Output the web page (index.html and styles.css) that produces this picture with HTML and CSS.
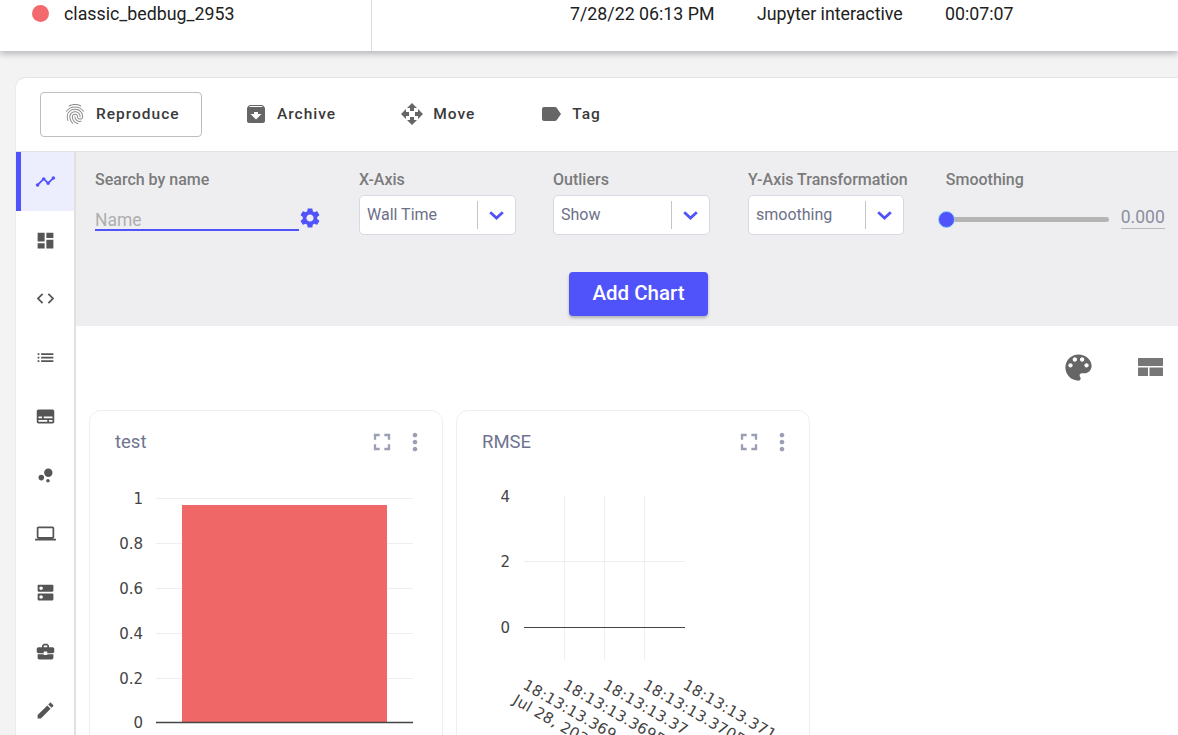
FILE: index.html
```html
<!DOCTYPE html>
<html>

<head>
  <meta charset="UTF-8">
  <title>classic_bedbug_2953</title>
  <link rel="stylesheet" href="styles.css">
</head>

<body>
  <div class="runRow">
    <div class="runName"><span class="statusDot"></span>classic_bedbug_2953</div>
    <div></div>
    <div>7/28/22 06:13 PM</div>
    <div>Jupyter interactive</div>
    <div>00:07:07</div>
  </div>

  <div class="panel">
    <div class="toolbar">
      <div class="reproduce">
        <svg class="icon fingerprint" viewBox="0 0 24 24"><path d="M17.81 4.47c-.08 0-.16-.02-.23-.06C15.66 3.42 14 3 12.01 3c-1.98 0-3.86.47-5.57 1.41-.24.13-.54.04-.68-.2-.13-.24-.04-.55.2-.68C7.82 2.52 9.86 2 12.01 2c2.13 0 3.99.47 6.03 1.52.25.13.34.43.21.67-.09.18-.26.28-.44.28zM3.5 9.72c-.1 0-.2-.03-.29-.09-.23-.16-.28-.47-.12-.7.99-1.4 2.25-2.5 3.75-3.27C9.98 4.04 14 4.03 17.15 5.65c1.5.77 2.76 1.86 3.75 3.25.16.22.11.54-.12.7-.23.16-.54.11-.7-.12-.9-1.26-2.04-2.25-3.39-2.94-2.87-1.47-6.54-1.47-9.4.01-1.36.7-2.5 1.7-3.4 2.96-.08.14-.23.21-.39.21zm6.25 12.07c-.13 0-.26-.05-.35-.15-.87-.87-1.34-1.43-2.01-2.64-.69-1.23-1.05-2.73-1.05-4.34 0-2.97 2.54-5.39 5.66-5.39s5.66 2.42 5.66 5.39c0 .28-.22.5-.5.5s-.5-.22-.5-.5c0-2.42-2.09-4.39-4.66-4.39s-4.66 1.97-4.66 4.39c0 1.44.32 2.77.93 3.85.64 1.15 1.08 1.64 1.85 2.42.19.2.19.51 0 .71-.11.1-.24.15-.37.15zm7.17-1.85c-1.19 0-2.24-.3-3.1-.89-1.49-1.01-2.38-2.65-2.38-4.39 0-.28.22-.5.5-.5s.5.22.5.5c0 1.41.72 2.74 1.94 3.56.71.48 1.54.71 2.54.71.24 0 .64-.03 1.04-.1.27-.05.53.13.58.41.05.27-.13.53-.41.58-.57.11-1.07.12-1.21.12zM14.91 22c-.04 0-.09-.01-.13-.02-1.59-.44-2.63-1.03-3.72-2.1-1.4-1.39-2.17-3.24-2.17-5.22 0-1.62 1.38-2.94 3.08-2.94s3.08 1.32 3.08 2.94c0 1.07.93 1.94 2.08 1.94s2.08-.87 2.08-1.94c0-3.77-3.25-6.83-7.25-6.83-2.84 0-5.44 1.58-6.61 4.03-.39.81-.59 1.76-.59 2.8 0 .78.07 2.01.67 3.61.1.26-.03.55-.29.64-.26.1-.55-.04-.64-.29-.49-1.31-.73-2.61-.73-3.96 0-1.2.23-2.29.68-3.24 1.33-2.79 4.28-4.6 7.51-4.6 4.55 0 8.25 3.51 8.25 7.83 0 1.62-1.38 2.94-3.08 2.94s-3.08-1.32-3.08-2.94c0-1.07-.93-1.94-2.08-1.94s-2.08.87-2.08 1.94c0 1.71.66 3.31 1.87 4.51.95.94 1.86 1.46 3.27 1.85.27.07.42.35.35.61-.05.23-.26.38-.47.38z"/></svg>
        Reproduce
      </div>
      <div class="toolBtn">
        <svg class="icon" viewBox="0 0 24 24"><path d="M20.54 5.23l-1.39-1.68C18.88 3.21 18.47 3 18 3H6c-.47 0-.88.21-1.16.55L3.46 5.23C3.17 5.57 3 6.02 3 6.5V19c0 1.1.9 2 2 2h14c1.1 0 2-.9 2-2V6.5c0-.48-.17-.93-.46-1.27zM12 17.5L6.5 12H10v-2h4v2h3.5L12 17.5zM5.12 5l.81-1h12l.94 1H5.12z"/></svg>
        Archive
      </div>
      <div class="toolBtn">
        <svg class="icon" viewBox="0 0 24 24"><path d="M10 9h4V6h3l-5-5-5 5h3v3zm-1 1H6V7l-5 5 5 5v-3h3v-4zm14 2l-5-5v3h-3v4h3v3l5-5zm-9 3h-4v3H7l5 5 5-5h-3v-3z"/></svg>
        Move
      </div>
      <div class="toolBtn">
        <svg class="icon" viewBox="0 0 24 24"><path d="M17.63 5.84C17.27 5.33 16.67 5 16 5L5 5.01C3.9 5.01 3 5.9 3 7v10c0 1.1.9 1.99 2 1.99L16 19c.67 0 1.27-.33 1.63-.84L22 12l-4.37-6.16z"/></svg>
        Tag
      </div>
    </div>

    <div class="panelBody">
      <div class="tabs">
        <div class="tab active"><svg viewBox="0 0 24 24"><path d="M23 8c0 1.1-.9 2-2 2-.18 0-.35-.02-.51-.07l-3.56 3.55c.05.16.07.34.07.52 0 1.1-.9 2-2 2s-2-.9-2-2c0-.18.02-.36.07-.52l-2.55-2.55c-.16.05-.34.07-.52.07s-.36-.02-.52-.07l-4.55 4.56c.05.16.07.33.07.51 0 1.1-.9 2-2 2s-2-.9-2-2 .9-2 2-2c.18 0 .35.02.51.07l4.56-4.55C8.02 9.36 8 9.18 8 9c0-1.1.9-2 2-2s2 .9 2 2c0 .18-.02.36-.07.52l2.55 2.55c.16-.05.34-.07.52-.07s.36.02.52.07l3.55-3.56C19.02 8.35 19 8.18 19 8c0-1.1.9-2 2-2s2 .9 2 2z"/></svg></div>
        <div class="tab"><svg viewBox="0 0 24 24"><path d="M3 13h8V3H3v10zm0 8h8v-6H3v6zm10 0h8V11h-8v10zm0-18v6h8V3h-8z"/></svg></div>
        <div class="tab"><svg viewBox="0 0 24 24"><path d="M9.4 16.6L4.8 12l4.6-4.6L8 6l-6 6 6 6 1.4-1.4zm5.2 0l4.6-4.6-4.6-4.6L16 6l6 6-6 6-1.4-1.4z"/></svg></div>
        <div class="tab"><svg viewBox="0 0 24 24"><path d="M3 13h2v-2H3v2zm0 4h2v-2H3v2zm0-8h2V7H3v2zm4 4h14v-2H7v2zm0 4h14v-2H7v2zM7 7v2h14V7H7z"/></svg></div>
        <div class="tab"><svg viewBox="0 0 24 24"><path d="M20 4H4c-1.1 0-2 .9-2 2v12c0 1.1.9 2 2 2h16c1.1 0 2-.9 2-2V6c0-1.1-.9-2-2-2zM4 12h4v2H4v-2zm10 6H4v-2h10v2zm6 0h-4v-2h4v2zm0-4H10v-2h10v2z"/></svg></div>
        <div class="tab"><svg viewBox="0 0 24 24"><circle cx="7.2" cy="14.4" r="3.2"/><circle cx="14.8" cy="18" r="2"/><circle cx="15.2" cy="8.8" r="4.8"/></svg></div>
        <div class="tab"><svg viewBox="0 0 24 24"><path d="M20 18c1.1 0 1.99-.9 1.99-2L22 6c0-1.1-.9-2-2-2H4c-1.1 0-2 .9-2 2v10c0 1.1.9 2 2 2H0v2h24v-2h-4zM4 6h16v10H4V6z"/></svg></div>
        <div class="tab"><svg viewBox="0 0 24 24"><path d="M20 13H4c-.55 0-1 .45-1 1v6c0 .55.45 1 1 1h16c.55 0 1-.45 1-1v-6c0-.55-.45-1-1-1zM7 19c-1.1 0-2-.9-2-2s.9-2 2-2 2 .9 2 2-.9 2-2 2zM20 3H4c-.55 0-1 .45-1 1v6c0 .55.45 1 1 1h16c.55 0 1-.45 1-1V4c0-.55-.45-1-1-1zM7 9c-1.1 0-2-.9-2-2s.9-2 2-2 2 .9 2 2-.9 2-2 2z"/></svg></div>
        <div class="tab"><svg viewBox="0 0 24 24"><path d="M10 16v-1H3.01L3 19c0 1.11.89 2 2 2h14c1.11 0 2-.89 2-2v-4h-7v1h-4zm10-9h-4.01V5l-2-2h-4l-2 2v2H4c-1.1 0-2 .9-2 2v3c0 1.11.89 2 2 2h6v-2h4v2h6c1.1 0 2-.9 2-2V9c0-1.1-.9-2-2-2zm-6 0h-4V5h4v2z"/></svg></div>
        <div class="tab"><svg viewBox="0 0 24 24"><path d="M3 17.25V21h3.75L17.81 9.94l-3.75-3.75L3 17.25zM20.71 7.04c.39-.39.39-1.02 0-1.41l-2.34-2.34c-.39-.39-1.02-.39-1.41 0l-1.83 1.83 3.75 3.75 1.83-1.83z"/></svg></div>
      </div>

      <div class="content">
        <div class="filters">
          <div class="filterRow">
            <div class="filter searchFilter">
              <div class="filterLabel">Search by name</div>
              <div class="searchRow">
                <div class="searchInput">Name</div>
                <svg class="gear" viewBox="0 0 24 24"><path d="M19.14 12.94c.04-.3.06-.61.06-.94 0-.32-.02-.64-.07-.94l2.03-1.58c.18-.14.23-.41.12-.61l-1.92-3.32c-.12-.22-.37-.29-.59-.22l-2.39.96c-.5-.38-1.03-.7-1.62-.94l-.36-2.54c-.04-.24-.24-.41-.48-.41h-3.84c-.24 0-.43.17-.47.41l-.36 2.54c-.59.24-1.13.57-1.62.94l-2.39-.96c-.22-.08-.47 0-.59.22L2.74 8.87c-.12.21-.08.47.12.61l2.03 1.58c-.05.3-.09.63-.09.94s.02.64.07.94l-2.03 1.58c-.18.14-.23.41-.12.61l1.92 3.32c.12.22.37.29.59.22l2.39-.96c.5.38 1.03.7 1.62.94l.36 2.54c.05.24.24.41.48.41h3.84c.24 0 .44-.17.47-.41l.36-2.54c.59-.24 1.13-.56 1.62-.94l2.39.96c.22.08.47 0 .59-.22l1.92-3.32c.12-.22.07-.47-.12-.61l-2.01-1.58zM12 15.6c-1.98 0-3.6-1.62-3.6-3.6s1.62-3.6 3.6-3.6 3.6 1.62 3.6 3.6-1.62 3.6-3.6 3.6z"/></svg>
              </div>
            </div>
            <div class="filter">
              <div class="filterLabel">X-Axis</div>
              <div class="select"><span class="selectValue">Wall Time</span><span class="selectArrow"><svg viewBox="0 0 15 9"><path d="M1.2 1.2L7.5 7l6.3-5.8"/></svg></span></div>
            </div>
            <div class="filter">
              <div class="filterLabel">Outliers</div>
              <div class="select"><span class="selectValue">Show</span><span class="selectArrow"><svg viewBox="0 0 15 9"><path d="M1.2 1.2L7.5 7l6.3-5.8"/></svg></span></div>
            </div>
            <div class="filter yAxisFilter">
              <div class="filterLabel">Y-Axis Transformation</div>
              <div class="select"><span class="selectValue">smoothing</span><span class="selectArrow"><svg viewBox="0 0 15 9"><path d="M1.2 1.2L7.5 7l6.3-5.8"/></svg></span></div>
            </div>
            <div class="filter smoothFilter">
              <div class="filterLabel">Smoothing</div>
              <div class="sliderRow">
                <div class="sliderTrack"><span class="sliderThumb"></span></div>
                <div class="sliderValue">0.000</div>
              </div>
            </div>
          </div>
          <div class="addRow"><div class="addChart">Add Chart</div></div>
        </div>

        <div class="chartTools">
          <svg class="palette" viewBox="0 0 24 24"><path d="M12 3c-4.97 0-9 4.03-9 9s4.03 9 9 9c.83 0 1.5-.67 1.5-1.5 0-.39-.15-.74-.39-1.01-.23-.26-.38-.61-.38-.99 0-.83.67-1.5 1.5-1.5H16c2.76 0 5-2.24 5-5 0-4.42-4.03-8-9-8zm-5.5 9c-.83 0-1.5-.67-1.5-1.5S5.67 9 6.5 9 8 9.67 8 10.5 7.33 12 6.5 12zm3-4C8.67 8 8 7.33 8 6.5S8.67 5 9.5 5s1.5.67 1.5 1.5S10.33 8 9.5 8zm5 0c-.83 0-1.5-.67-1.5-1.5S13.67 5 14.5 5s1.5.67 1.5 1.5S15.33 8 14.5 8zm3 4c-.83 0-1.5-.67-1.5-1.5S16.67 9 17.5 9s1.5.67 1.5 1.5-.67 1.5-1.5 1.5z"/></svg>
          <svg class="layoutIcon" viewBox="0 0 25 18"><path d="M0 0h25v8H0zM0 9.5h10V18H0zM11.5 9.5H25V18H11.5z"/></svg>
        </div>

        <div class="charts">
          <div class="card">
            <div class="cardHead">
              <span class="cardTitle">test</span>
              <svg class="cardIcon" viewBox="0 0 24 24"><path d="M7 14H5v5h5v-2H7v-3zm-2-4h2V7h3V5H5v5zm12 7h-3v2h5v-5h-2v3zM14 5v2h3v3h2V5h-5z"/></svg>
              <svg class="cardIcon" viewBox="0 0 24 24"><path d="M12 8c1.1 0 2-.9 2-2s-.9-2-2-2-2 .9-2 2 .9 2 2 2zm0 2c-1.1 0-2 .9-2 2s.9 2 2 2 2-.9 2-2-.9-2-2-2zm0 6c-1.1 0-2 .9-2 2s.9 2 2 2 2-.9 2-2-.9-2-2-2z"/></svg>
            </div>
            <svg class="plot" viewBox="90 470 352 265">
              <g class="grid">
                <path d="M156 498.5h257M156 543.5h257M156 588.5h257M156 633.5h257M156 678.5h257"/>
              </g>
              <rect x="182" y="505" width="205" height="218" fill="#ef6767"/>
              <path class="zero thick" d="M156 722.5h257"/>
              <g class="tick">
                <text x="143" y="504">1</text>
                <text x="143" y="549">0.8</text>
                <text x="143" y="594">0.6</text>
                <text x="143" y="639">0.4</text>
                <text x="143" y="684">0.2</text>
                <text x="143" y="728">0</text>
              </g>
            </svg>
          </div>

          <div class="card">
            <div class="cardHead">
              <span class="cardTitle">RMSE</span>
              <svg class="cardIcon" viewBox="0 0 24 24"><path d="M7 14H5v5h5v-2H7v-3zm-2-4h2V7h3V5H5v5zm12 7h-3v2h5v-5h-2v3zM14 5v2h3v3h2V5h-5z"/></svg>
              <svg class="cardIcon" viewBox="0 0 24 24"><path d="M12 8c1.1 0 2-.9 2-2s-.9-2-2-2-2 .9-2 2 .9 2 2 2zm0 2c-1.1 0-2 .9-2 2s.9 2 2 2 2-.9 2-2-.9-2-2-2zm0 6c-1.1 0-2 .9-2 2s.9 2 2 2 2-.9 2-2-.9-2-2-2z"/></svg>
            </div>
            <svg class="plot" viewBox="457 470 352 265">
              <g class="grid">
                <path d="M524 561.5h161M564.5 496v164M604.5 496v164M644.5 496v164"/>
              </g>
              <path class="zero" d="M524 627.5h161"/>
              <g class="tick">
                <text x="510" y="502">4</text>
                <text x="510" y="567">2</text>
                <text x="510" y="633">0</text>
              </g>
              <g class="tick angled">
                <text transform="translate(522 688) rotate(30)">18:13:13.369</text>
                <text transform="translate(562 688) rotate(30)">18:13:13.3695</text>
                <text transform="translate(602 688) rotate(30)">18:13:13.37</text>
                <text transform="translate(642 688) rotate(30)">18:13:13.3705</text>
                <text transform="translate(682 688) rotate(30)">18:13:13.371</text>
                <text transform="translate(512 703) rotate(30)">Jul 28, 2022</text>
              </g>
            </svg>
          </div>
        </div>
      </div>
    </div>
  </div>
</body>

</html>
```

FILE: styles.css
```css
html,
body {
  height: 735px;
  overflow: hidden;
}

body {
  margin: 0;
  background-color: #f3f3f3;
  font-family: Roboto, "Liberation Sans", sans-serif;
  color: #212121;
}

.runRow {
  display: grid;
  grid-template-columns: 372px 198px 187px 188px 1fr;
  height: 51px;
  background-color: #fff;
  box-shadow: 0 3px 6px rgba(60, 60, 80, 0.32);
  font-size: 17.8px;
  line-height: 28px;
}

.runName {
  display: flex;
  align-items: flex-start;
  padding-left: 32px;
  border-right: 1px solid #ddd;
}

.statusDot {
  width: 17px;
  height: 17px;
  margin: 5px 15px 0 0;
  border-radius: 50%;
  background-color: #f26a6d;
}

.panel {
  margin: 26px 0 0 16px;
  background-color: #fff;
  border-top: 1px solid #e4e4e4;
  border-top-left-radius: 10px;
  box-shadow: -1px 0 0 #ececec;
}

.toolbar {
  display: flex;
  align-items: center;
  gap: 20px;
  height: 73px;
  padding-left: 24px;
  border-bottom: 1px solid #e2e2e2;
  font-size: 15.5px;
  font-weight: 500;
  letter-spacing: 1px;
  color: #3a3a3a;
}

.icon {
  width: 24px;
  height: 24px;
  fill: #666;
}

.reproduce {
  display: flex;
  align-items: center;
  gap: 9px;
  box-sizing: border-box;
  width: 162px;
  height: 45px;
  padding: 0 0 2px 22px;
  border: 1px solid #bdbdbd;
  border-radius: 4px;
}

.fingerprint {
  fill: #8d8d8d;
}

.toolBtn {
  display: flex;
  align-items: center;
  gap: 9px;
  padding: 0 22px 2px;
}

.panelBody {
  display: flex;
}

.tabs {
  flex: none;
  width: 58px;
  border-right: 2px solid #e0e0e0;
}

.tab {
  display: flex;
  align-items: center;
  justify-content: center;
  height: 58.75px;
}

.tab svg {
  width: 21px;
  height: 21px;
  fill: #555;
}

.tab.active {
  background-color: #ecedfd;
  box-shadow: inset 5px 0 0 #5053f9;
}

.tab.active svg {
  fill: #5053f9;
}

.content {
  flex: 1;
  min-width: 0;
}

.filters {
  box-sizing: border-box;
  height: 174px;
  padding: 18px 0 0 19px;
  background-color: #eeeef1;
}

.filterRow {
  display: flex;
  gap: 37px;
  height: 65px;
}

.filterLabel {
  margin-bottom: 5px;
  font-size: 16px;
  font-weight: 500;
  line-height: 20px;
  white-space: nowrap;
  color: #7b7b7b;
}

.searchFilter {
  width: 227px;
}

.searchRow {
  display: flex;
  align-items: flex-start;
}

.searchInput {
  box-sizing: border-box;
  width: 204px;
  height: 23px;
  margin-top: 13px;
  border-bottom: 2px solid #5053f9;
  font-size: 17.5px;
  line-height: 24px;
  color: #aeaeae;
}

.gear {
  width: 24px;
  height: 24px;
  margin: 11px 0 0 -1px;
  fill: #5053f9;
}

.select {
  display: flex;
  align-items: center;
  box-sizing: border-box;
  width: 157px;
  height: 40px;
  background-color: #fff;
  border: 1px solid #d6d8e8;
  border-radius: 5px;
  font-size: 16px;
  color: #6c7088;
}

.selectValue {
  flex: 1;
  padding: 0 0 2px 7px;
}

.selectArrow {
  display: flex;
  align-items: center;
  justify-content: center;
  width: 37px;
  height: 28px;
  border-left: 1px solid #c4c4c4;
}

.selectArrow svg {
  width: 15px;
  height: 9px;
  fill: none;
  stroke: #5053f9;
  stroke-width: 2.8;
}

.yAxisFilter {
  margin-left: 1px;
}

.yAxisFilter .select {
  width: 156px;
}

.smoothFilter {
  margin-left: 1px;
}

.sliderRow {
  display: flex;
  align-items: center;
  height: 40px;
  margin-top: 9px;
}

.sliderTrack {
  position: relative;
  width: 163px;
  height: 5px;
  background-color: #b5b5b5;
  border-radius: 3px;
}

.sliderThumb {
  position: absolute;
  top: -6px;
  left: -8px;
  box-sizing: border-box;
  width: 17px;
  height: 17px;
  background-color: #5053f9;
  border: 1px solid #8fd3fb;
  border-radius: 50%;
}

.sliderValue {
  margin: -3px 0 0 12px;
  border-bottom: 1px solid #b9b9b9;
  font-size: 17.5px;
  line-height: 22px;
  color: #8b8f9e;
}

.addRow {
  display: flex;
  justify-content: center;
  padding-top: 37px;
  margin-left: 4px;
}

.addChart {
  width: 139px;
  height: 44px;
  background-color: #5053f9;
  border-radius: 4px;
  box-shadow: 0 2px 3px rgba(0, 0, 0, 0.25);
  font-size: 20.5px;
  font-weight: 500;
  line-height: 43px;
  text-align: center;
  color: #fff;
}

.chartTools {
  display: flex;
  justify-content: flex-end;
  align-items: center;
  box-sizing: border-box;
  height: 84px;
  padding: 0 15px 2px 0;
}

.palette {
  width: 35px;
  height: 35px;
  margin-right: 42px;
  fill: #666;
}

.layoutIcon {
  width: 25px;
  height: 18px;
  fill: #777;
}

.charts {
  display: flex;
  gap: 13px;
  padding-left: 13px;
}

.card {
  flex: none;
  box-sizing: border-box;
  width: 354px;
  height: 340px;
  border: 1px solid #eee;
  border-radius: 12px;
}

.cardHead {
  display: flex;
  align-items: center;
  box-sizing: border-box;
  height: 59px;
  padding: 2px 13px 0 25px;
}

.cardTitle {
  flex: 1;
  font-size: 18.5px;
  color: #6f7490;
}

.cardIcon {
  width: 28px;
  height: 28px;
  margin-left: 5px;
  fill: #9a9fb3;
}

.plot {
  display: block;
  width: 352px;
  height: 265px;
}

.grid path {
  fill: none;
  stroke: #eee;
  stroke-width: 1;
}

.zero {
  fill: none;
  stroke: #444;
  stroke-width: 1;
}

.zero.thick {
  stroke-width: 1.5;
}

.tick text {
  font-family: "DejaVu Sans", Verdana, sans-serif;
  font-size: 15px;
  fill: #444;
  text-anchor: end;
}

.tick.angled text {
  letter-spacing: 0.35px;
  text-anchor: start;
}
```
